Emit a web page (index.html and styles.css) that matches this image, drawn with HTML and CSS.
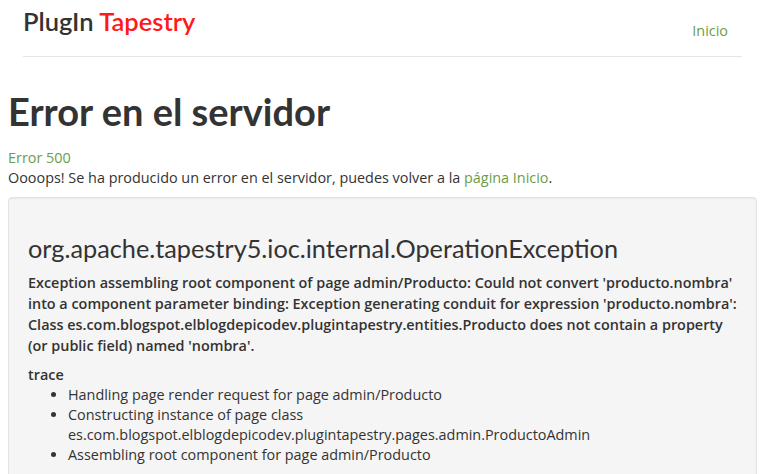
FILE: index.html
```html
<!DOCTYPE html>
<html lang="es">
<head>
    <meta charset="UTF-8">
    <title>Error en el servidor</title>
    <link rel="stylesheet" href="styles.css">
</head>
<body>
<div class="header">
    <a class="brand" href="#">PlugIn <span class="brand-red">Tapestry</span></a>
    <a class="nav-link" href="#">Inicio</a>
</div>
<div class="content">
    <h1>Error en el servidor</h1>
    <p class="code">Error 500</p>
    <p>Oooops! Se ha producido un error en el servidor, puedes volver a la <a href="#">página Inicio</a>.</p>
    <div class="well">
        <h2>org.apache.tapestry5.ioc.internal.OperationException</h2>
        <p class="message">Exception assembling root component of page admin/Producto: Could not convert 'producto.nombra' into a component parameter binding: Exception generating conduit for expression 'producto.nombra': Class es.com.blogspot.elblogdepicodev.plugintapestry.entities.Producto does not contain a property (or public field) named 'nombra'.</p>
        <div class="trace-title">trace</div>
        <ul class="trace">
            <li>Handling page render request for page admin/Producto</li>
            <li>Constructing instance of page class es.com.blogspot.elblogdepicodev.plugintapestry.pages.admin.ProductoAdmin</li>
            <li>Assembling root component for page admin/Producto</li>
        </ul>
    </div>
</div>
</body>
</html>
```

FILE: styles.css
```css
body {
    margin: 0;
    font-family: "Open Sans", "Liberation Sans", sans-serif;
    font-size: 14.4px;
    line-height: 20px;
    color: #333333;
    background-color: #ffffff;
}

a {
    color: #6a9d4b;
    text-decoration: none;
}

.header {
    display: flex;
    justify-content: space-between;
    align-items: flex-start;
    margin: 0 22px 0 23px;
    height: 56px;
    border-bottom: 1px solid #e5e5e5;
}

.brand {
    font-family: "Lato", "DejaVu Sans", sans-serif;
    font-size: 25.5px;
    font-weight: 600;
    color: #333333;
    margin-top: 6px;
    line-height: 30px;
}

.brand-red {
    color: #ff1a1a;
}

.nav-link {
    margin-top: 21px;
    margin-right: 14px;
}

.content {
    padding: 0 7px 0 8px;
}

h1 {
    font-family: "Lato", "DejaVu Sans", sans-serif;
    font-size: 38px;
    font-weight: 700;
    line-height: 40px;
    margin: 34px 0 0 0;
}

p {
    margin: 0;
}

.code {
    margin-top: 17px;
    color: #6a9d4b;
}

.well {
    margin-top: 9px;
    background-color: #f5f5f5;
    border: 1px solid #e3e3e3;
    border-radius: 4px;
    padding: 34px 19px 20px 19px;
    box-shadow: inset 0 1px 1px rgba(0, 0, 0, 0.05);
}

h2 {
    font-family: "Lato", "DejaVu Sans", sans-serif;
    font-size: 25.3px;
    font-weight: 400;
    line-height: 32px;
    margin: 0 0 8px 0;
}

.message {
    font-weight: 600;
    line-height: 21px;
}

.trace-title {
    font-weight: 600;
    margin-top: 9px;
}

.trace {
    margin: 0;
    padding-left: 40px;
}
```
